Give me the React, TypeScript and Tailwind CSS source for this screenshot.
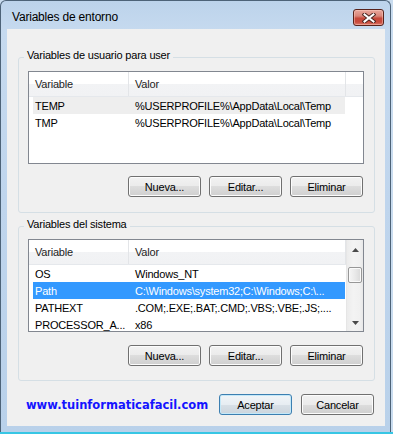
const USER_VARS = [
  ['TEMP', '%USERPROFILE%\\AppData\\Local\\Temp'],
  ['TMP', '%USERPROFILE%\\AppData\\Local\\Temp'],
];

const SYSTEM_VARS = [
  ['OS', 'Windows_NT'],
  ['Path', 'C:\\Windows\\system32;C:\\Windows;C:\\...'],
  ['PATHEXT', '.COM;.EXE;.BAT;.CMD;.VBS;.VBE;.JS;....'],
  ['PROCESSOR_A...', 'x86'],
];

function Button({ label, primary }: { label: string; primary?: boolean }) {
  return (
    <button
      className={
        primary
          ? 'w-[73px] h-[21px] rounded-[3px] border border-[#3c7fb1] bg-[linear-gradient(to_bottom,#f1f5f8_0%,#e7edf2_50%,#d8e0e7_50%,#ccd5dd_100%)] shadow-[inset_0_0_0_1px_#c4e8f8] flex items-center justify-center text-black'
          : 'w-[73px] h-[21px] rounded-[3px] border border-[#707070] bg-[linear-gradient(to_bottom,#f2f2f2_0%,#ebebeb_50%,#dddddd_50%,#cfcfcf_100%)] shadow-[inset_0_0_0_1px_#fcfcfc] flex items-center justify-center text-black'
      }
    >
      {label}
    </button>
  );
}

function ListHeader({ fill }: { fill?: boolean }) {
  return (
    <div className="flex h-[25px] shrink-0 border-b border-[#e5e8ec] bg-[linear-gradient(to_bottom,#ffffff_0%,#ffffff_48%,#f2f3f5_48%,#f1f2f4_100%)] text-[#1e1e1e]">
      <div className="w-[100px] pl-[6px] flex items-center border-r border-[#e3e5e8]">Variable</div>
      <div className="w-[217px] pl-[6px] flex items-center border-r border-[#e3e5e8]">Valor</div>
      {fill && <div className="flex-1" />}
    </div>
  );
}

function Row({ name, value, state }: { name: string; value: string; state?: 'hover' | 'selected' }) {
  return (
    <div className="h-[17px] pl-[4px] flex shrink-0">
      <div
        className={
          state === 'selected'
            ? 'w-[312px] flex items-center bg-[#3399ff] text-white'
            : state === 'hover'
              ? 'w-[312px] flex items-center bg-[#eeeeee] text-black'
              : 'w-[312px] flex items-center text-black'
        }
      >
        <div className="w-[96px] pl-[2px] whitespace-nowrap overflow-hidden">{name}</div>
        <div className="flex-1 pl-[6px] whitespace-nowrap overflow-hidden">{value}</div>
      </div>
    </div>
  );
}

function Arrow({ down }: { down?: boolean }) {
  return (
    <svg width="7" height="4" viewBox="0 0 7 4">
      <polygon points={down ? '0,0 7,0 3.5,4' : '3.5,0 7,4 0,4'} fill="#4a4a4a" />
    </svg>
  );
}

function Scrollbar() {
  return (
    <div className="w-[17px] shrink-0 flex flex-col border-l border-[#e6e6e6] bg-[linear-gradient(to_right,#ececec_0%,#f3f3f3_40%,#f0f0f0_80%,#e8e8e8_100%)]">
      <div className="h-[17px] pt-[3px] flex items-center justify-center">
        <Arrow />
      </div>
      <div className="mt-[10px] mx-[1px] h-[16px] rounded-[2px] border border-[#979797] bg-[linear-gradient(to_right,#f6f6f6_0%,#e9e9e9_50%,#d9d9d9_100%)] shadow-[inset_0_0_0_1px_#fafafa]" />
      <div className="flex-1" />
      <div className="h-[17px] flex items-center justify-center">
        <Arrow down />
      </div>
    </div>
  );
}

function VarList({ rows, scroll, hoverRow, selectedRow }: { rows: string[][]; scroll?: boolean; hoverRow?: number; selectedRow?: number }) {
  return (
    <div className="h-[93px] border border-[#828790] bg-white flex overflow-hidden">
      <div className="flex-1 min-w-0 flex flex-col">
        <ListHeader fill={!scroll} />
        {rows.map(([name, value], i) => (
          <Row
            key={name}
            name={name}
            value={value}
            state={i === selectedRow ? 'selected' : i === hoverRow ? 'hover' : undefined}
          />
        ))}
      </div>
      {scroll && <Scrollbar />}
    </div>
  );
}

function CloseButton() {
  return (
    <div className="w-[31px] h-[17px] rounded-[3px] border border-[#58231b] bg-[linear-gradient(to_bottom,#e9a79c_0%,#d9867a_40%,#c6493b_55%,#c84a3c_80%,#db7b6b_100%)] shadow-[inset_0_0_0_1px_rgba(255,210,200,0.45)] flex items-center justify-center">
      <svg width="14" height="10" viewBox="0 0 14 10">
        <path d="M2.5 1.5 L11.5 8.5 M11.5 1.5 L2.5 8.5" stroke="#4a2520" strokeWidth="4" strokeLinecap="square" />
        <path d="M2.5 1.5 L11.5 8.5 M11.5 1.5 L2.5 8.5" stroke="#ffffff" strokeWidth="2" strokeLinecap="square" />
      </svg>
    </div>
  );
}

export default function App() {
  return (
    <div className="w-[393px] h-[434px] flex flex-col bg-[#c9dcef] font-['Liberation_Sans',Arial,sans-serif] text-[11px] tracking-[-0.2px] leading-[14px]">
      <div className="flex h-[432px]">
        {/* Window frame */}
        <div className="w-[391px] h-[432px] flex flex-col border-l border-t border-r border-[#4d6378] rounded-t-[6px] bg-[linear-gradient(to_bottom,#bcd3eb_0%,#c6daef_30px,#bfd5ed_200px,#b9d1ea_100%)]">
          {/* Title bar */}
          <div className="h-[28px] flex items-start justify-between pl-[11px] pr-[6px] pt-[8px] shrink-0">
            <span className="text-[12px] leading-[17px] text-black">Variables de entorno</span>
            <CloseButton />
          </div>

          {/* Client area */}
          <div className="h-[397px] ml-[6px] mr-[5px] bg-[#f0f0f0] flex flex-col">
            <fieldset className="mt-[19px] ml-[11px] mr-[10px] border border-[#d5dfe5] rounded-[3px] pl-[9px] pr-[10px] pt-[5px] pb-[15px]">
              <legend className="ml-[-4px] px-[3px] leading-[14px] pb-[4px] text-black">Variables de usuario para user</legend>
              <VarList rows={USER_VARS} hoverRow={0} />
              <div className="mt-[12px] pr-[1px] flex justify-end gap-[8px]">
                <Button label="Nueva..." />
                <Button label="Editar..." />
                <Button label="Eliminar" />
              </div>
            </fieldset>

            <fieldset className="mt-[4px] ml-[11px] mr-[10px] border border-[#d5dfe5] rounded-[3px] pl-[9px] pr-[10px] pt-[4px] pb-[14px]">
              <legend className="ml-[-4px] px-[3px] leading-[14px] pb-[4px] text-black">Variables del sistema</legend>
              <VarList rows={SYSTEM_VARS} scroll selectedRow={1} />
              <div className="mt-[13px] pr-[1px] flex justify-end gap-[8px]">
                <Button label="Nueva..." />
                <Button label="Editar..." />
                <Button label="Eliminar" />
              </div>
            </fieldset>

            <div className="mt-[13px] pl-[19px] pr-[11px] flex items-center">
              <span className="font-['DejaVu_Sans',Verdana,sans-serif] font-bold text-[11.5px] tracking-normal text-[#1414ff]">
                www.tuinformaticafacil.com
              </span>
              <div className="flex-1" />
              <div className="flex gap-[9px]">
                <Button label="Aceptar" primary />
                <Button label="Cancelar" />
              </div>
            </div>
          </div>
        </div>
        <div className="flex-1" />
      </div>
      <div className="h-[2px] bg-[#37c6e4]" />
    </div>
  );
}
